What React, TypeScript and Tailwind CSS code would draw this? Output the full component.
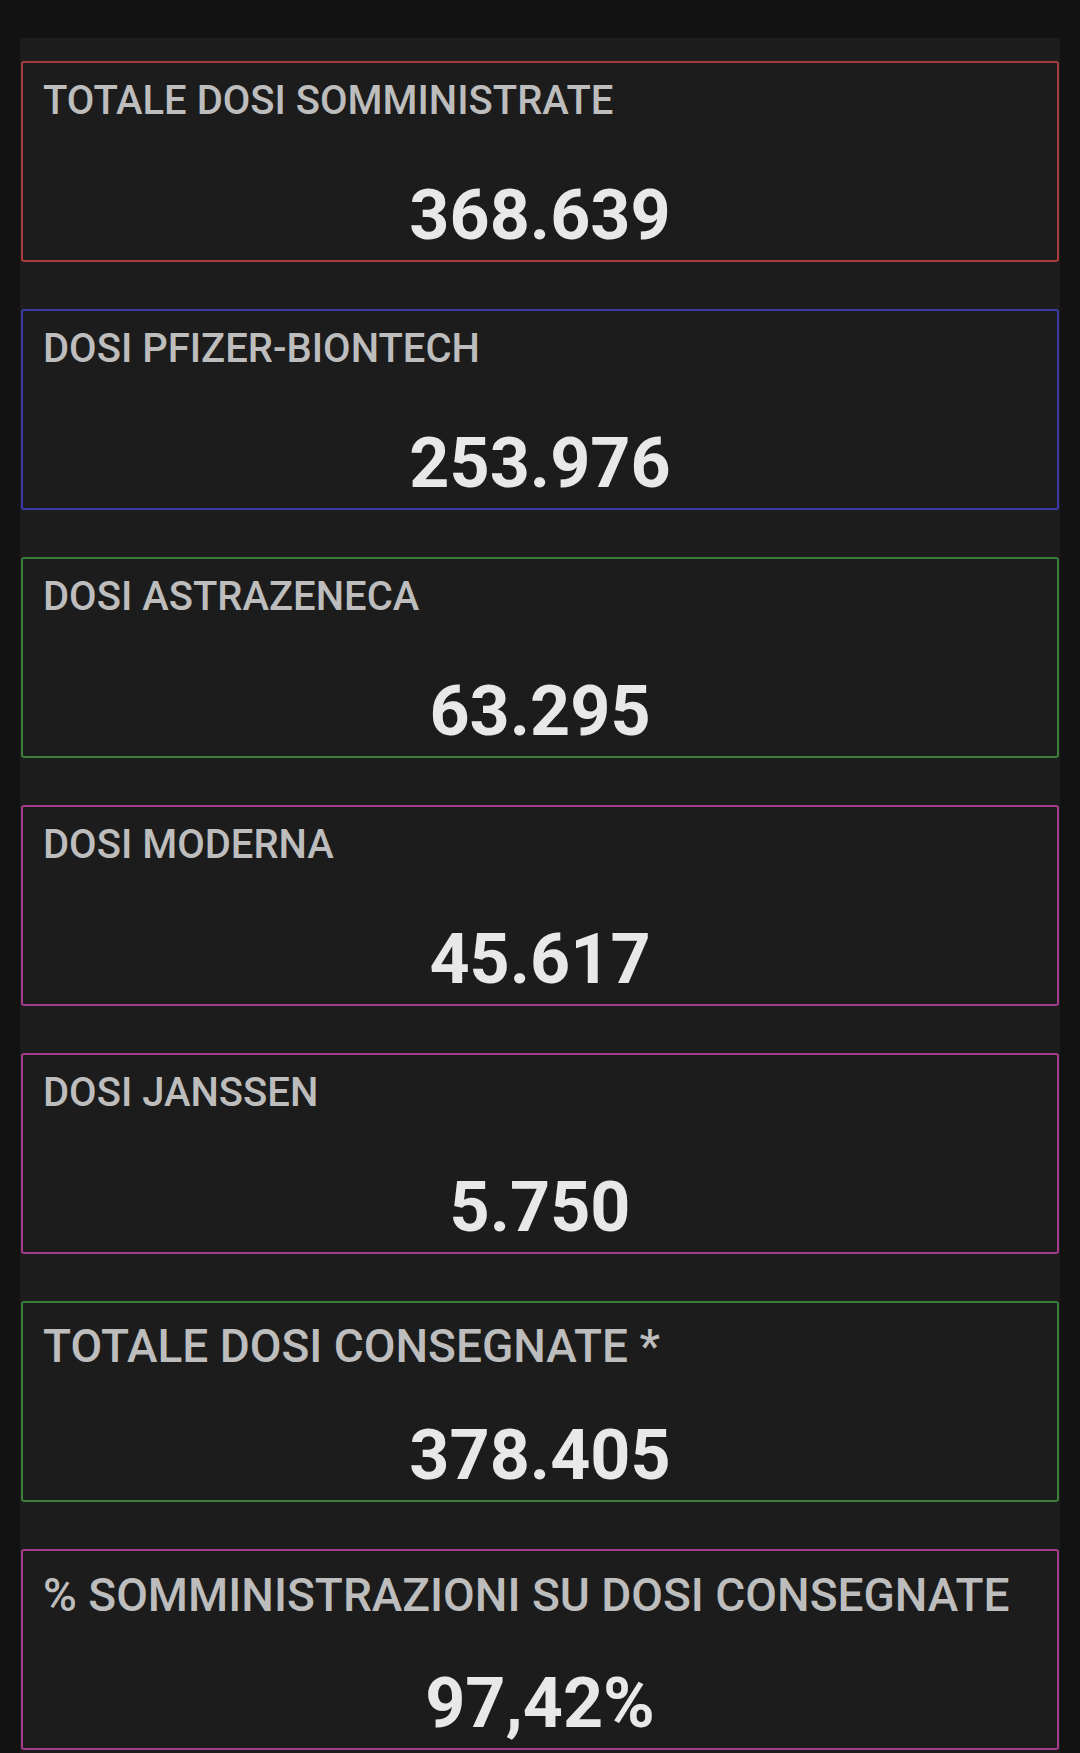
import React from "react";

type Card = {
  title: string;
  value: string;
  border: string;
  titleCls: string;
};

const cards: Card[] = [
  { title: "TOTALE DOSI SOMMINISTRATE", value: "368.639", border: "border-[#a83b3b]", titleCls: "pt-[18px] text-[40px] leading-[40px]" },
  { title: "DOSI PFIZER-BIONTECH", value: "253.976", border: "border-[#3b3ba8]", titleCls: "pt-[18px] text-[40px] leading-[40px]" },
  { title: "DOSI ASTRAZENECA", value: "63.295", border: "border-[#3d7d3a]", titleCls: "pt-[18px] text-[40px] leading-[40px]" },
  { title: "DOSI MODERNA", value: "45.617", border: "border-[#a23d8d]", titleCls: "pt-[18px] text-[40px] leading-[40px]" },
  { title: "DOSI JANSSEN", value: "5.750", border: "border-[#a23d8d]", titleCls: "pt-[18px] text-[40px] leading-[40px]" },
  { title: "TOTALE DOSI CONSEGNATE *", value: "378.405", border: "border-[#3d7d3a]", titleCls: "pt-[20px] text-[46px] leading-[46px]" },
  { title: "% SOMMINISTRAZIONI SU DOSI CONSEGNATE", value: "97,42%", border: "border-[#a23d8d]", titleCls: "pt-[21px] text-[46px] leading-[46px]" },
];

export default function App() {
  return (
    <div
      className="min-h-screen bg-[#121212] pt-[38px] px-[20px]"
      style={{ fontFamily: "Roboto, 'Liberation Sans', sans-serif" }}
    >
      <div className="bg-[#1d1d1d] px-[1px] pt-[23px] flex flex-col gap-[47px] h-[1715px]">
        {cards.map((c) => (
          <div
            key={c.title}
            className={`h-[201px] border-2 rounded-[3px] ${c.border} bg-[#1c1c1c] flex flex-col pl-[20px] pr-[20px] pb-[10px]`}
          >
            <div className={`${c.titleCls} font-medium text-[#bdbdbd] whitespace-nowrap`}>{c.title}</div>
            <div className="mt-auto text-center text-[70px] leading-[70px] font-bold text-[#e8e8e8]">
              {c.value}
            </div>
          </div>
        ))}
      </div>
    </div>
  );
}
